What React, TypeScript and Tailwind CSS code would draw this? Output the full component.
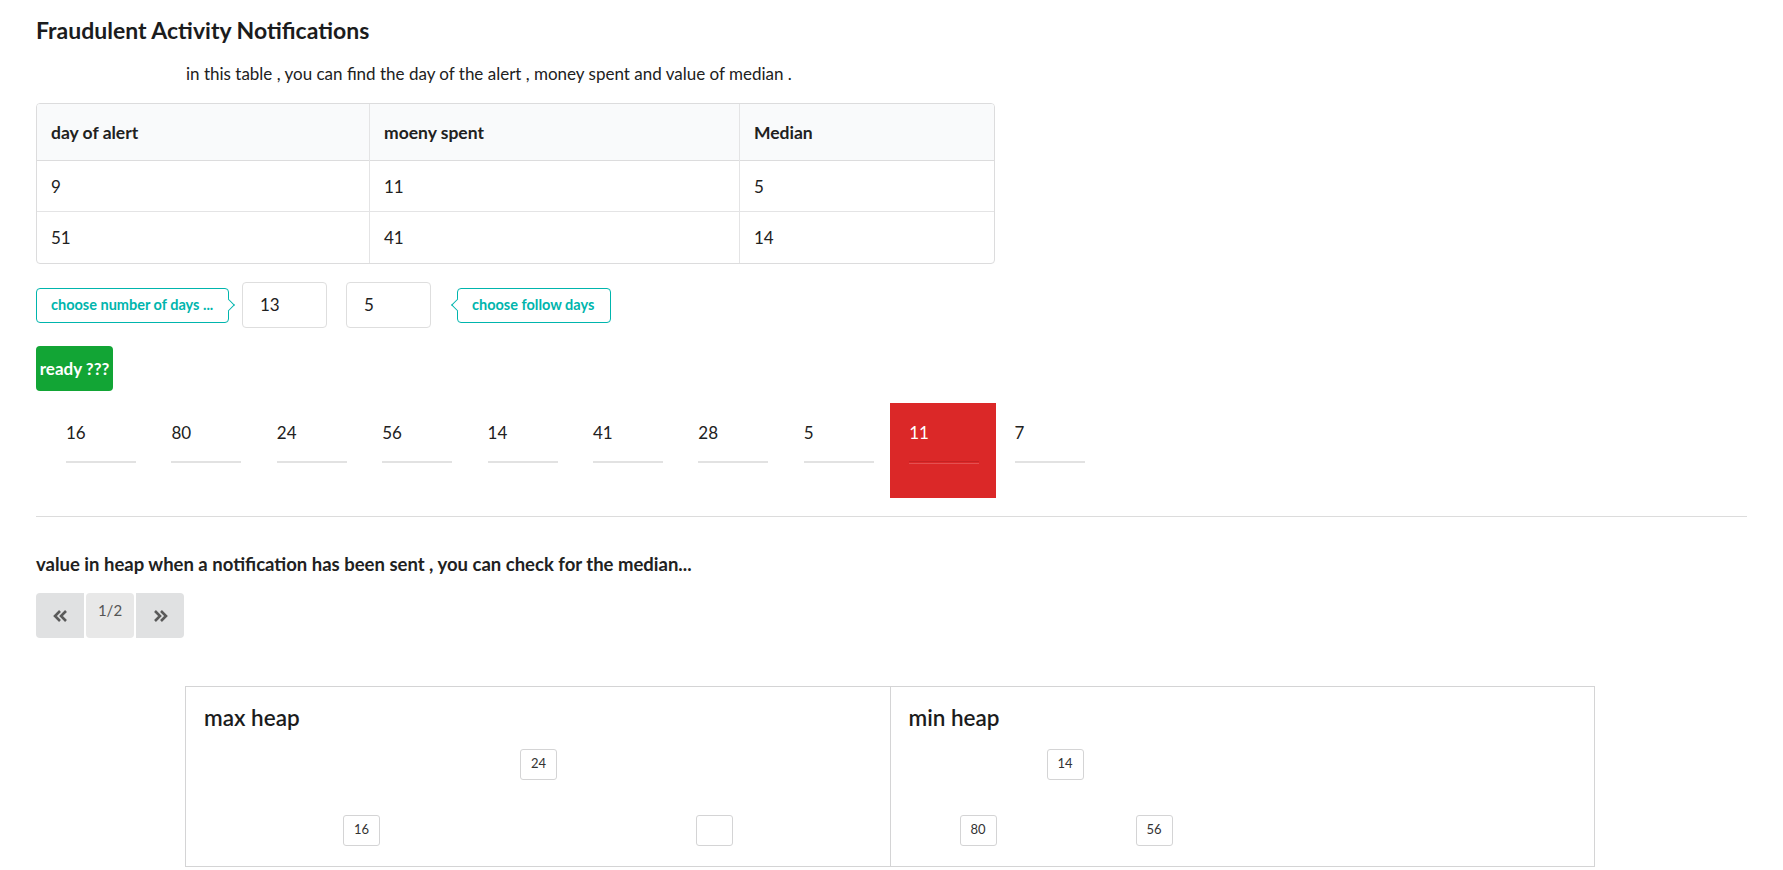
import React from "react";

const rows = [
  ["9", "11", "5"],
  ["51", "41", "14"],
];

const values = ["16", "80", "24", "56", "14", "41", "28", "5", "11", "7"];
const activeIndex = 8;

type HeapNode = { label: string; left: number; top: number };

const maxHeap: HeapNode[] = [
  { label: "24", left: 334, top: 62 },
  { label: "16", left: 157, top: 128 },
  { label: "", left: 510, top: 128 },
];

const minHeap: HeapNode[] = [
  { label: "14", left: 156, top: 62 },
  { label: "80", left: 69, top: 128 },
  { label: "56", left: 245, top: 128 },
];

function PointingLabel({
  text,
  side,
  className,
}: {
  text: string;
  side: "left" | "right";
  className?: string;
}) {
  return (
    <div
      className={`relative flex h-[35px] items-center rounded-[4px] border border-[#00b5ad] bg-white text-[14.5px] font-bold whitespace-nowrap text-[#00b5ad] ${className ?? ""}`}
    >
      {side === "right" ? (
        <span className="absolute top-1/2 right-[-5px] h-[9px] w-[9px] -translate-y-1/2 rotate-45 border-t border-r border-[#00b5ad] bg-white" />
      ) : (
        <span className="absolute top-1/2 left-[-5px] h-[9px] w-[9px] -translate-y-1/2 rotate-45 border-b border-l border-[#00b5ad] bg-white" />
      )}
      <span className="relative">{text}</span>
    </div>
  );
}

function HeapPanel({ title, nodes, last }: { title: string; nodes: HeapNode[]; last?: boolean }) {
  return (
    <div className={`relative h-full flex-1 ${last ? "" : "border-r border-[#d4d4d5]"}`}>
      <div className="pt-[17px] pl-[18px] text-[22.5px] leading-[28px] font-semibold text-[#1b1c1d]">
        {title}
      </div>
      {nodes.map((n, i) => (
        <div
          key={i}
          className="absolute flex h-[31px] w-[37px] justify-center rounded-[3px] border border-[#d4d4d5] bg-white pt-[6px] text-[13px] leading-[14px] text-[#333]"
          style={{ left: n.left, top: n.top }}
        >
          {n.label}
        </div>
      ))}
    </div>
  );
}

function Chevrons({ dir }: { dir: "left" | "right" }) {
  const d =
    dir === "left"
      ? "M7 1 L2 6 L7 11 M13 1 L8 6 L13 11"
      : "M2 1 L7 6 L2 11 M8 1 L13 6 L8 11";
  return (
    <svg width="15" height="12" viewBox="0 0 15 12" fill="none">
      <path d={d} stroke="#5a5a5a" strokeWidth="2.6" strokeLinejoin="miter" />
    </svg>
  );
}

export default function App() {
  return (
    <div className="min-h-[870px] bg-white px-[36px] pt-[16px] font-['Lato','Liberation_Sans',sans-serif] text-[#212121]">
      <h1 className="text-[23px] leading-[28px] font-bold text-[#1b1c1d]">
        Fraudulent Activity Notifications
      </h1>
      <p className="mt-[18px] pl-[150px] text-[17px] leading-[24px]">
        in this table , you can find the day of the alert , money spent and value of median .
      </p>

      <div className="mt-[17px] w-[959px] overflow-hidden rounded-[4px] border border-[#dcdcdd]">
        <div className="flex h-[57px] items-center border-b border-[#dcdcdd] bg-[#f9fafb] text-[17.5px] font-bold">
          <div className="w-[333px] border-r border-[#e4e4e5] pl-[14px] leading-[57px]">day of alert</div>
          <div className="w-[370px] border-r border-[#e4e4e5] pl-[14px] leading-[57px]">moeny spent</div>
          <div className="flex-1 pl-[14px] leading-[57px]">Median</div>
        </div>
        {rows.map((r, i) => (
          <div
            key={i}
            className={`flex h-[51px] items-center text-[17px] ${i < rows.length - 1 ? "border-b border-[#e4e4e5]" : ""}`}
          >
            <div className="w-[333px] border-r border-[#e4e4e5] pl-[14px] leading-[51px]">{r[0]}</div>
            <div className="w-[370px] border-r border-[#e4e4e5] pl-[14px] leading-[51px]">{r[1]}</div>
            <div className="flex-1 pl-[14px] leading-[51px]">{r[2]}</div>
          </div>
        ))}
      </div>

      <div className="mt-[18px] flex items-center">
        <PointingLabel text="choose number of days ..." side="right" className="w-[193px] pl-[14px]" />
        <div className="ml-[13px] flex h-[46px] w-[85px] items-center rounded-[4px] border border-[#dedede] pl-[17px] text-[17px]">
          13
        </div>
        <div className="ml-[19px] flex h-[46px] w-[85px] items-center rounded-[4px] border border-[#dedede] pl-[17px] text-[17px]">
          5
        </div>
        <PointingLabel text="choose follow days" side="left" className="ml-[26px] w-[154px] pl-[14px]" />
      </div>

      <button className="mt-[18px] flex h-[45px] w-[77px] items-center justify-center rounded-[4px] bg-[#12a535] text-[17px] font-bold whitespace-nowrap text-white">
        ready ???
      </button>

      <div className="mt-[12px] ml-[11px] flex">
        {values.map((v, i) => {
          const active = i === activeIndex;
          return (
            <div
              key={i}
              className={`h-[95px] w-[105.4px] px-[19px] pt-[18px] ${active ? "bg-[#db2828] text-white" : "text-[#212121]"}`}
            >
              <div className="text-[17px] leading-[24px]">{v}</div>
              {active ? (
                <div className="mt-[16px] h-[3px] w-[70px] border-t border-b border-t-[#c42222] border-b-[#e45050]" />
              ) : (
                <div className="mt-[16px] h-[2px] w-[70px] bg-[#e2e2e2]" />
              )}
            </div>
          );
        })}
      </div>

      <div className="mt-[18px] border-t border-[#dcdcdc]" />

      <h3 className="mt-[35px] text-[18.5px] leading-[24px] font-bold">
        value in heap when a notification has been sent , you can check for the median...
      </h3>

      <div className="mt-[17px] flex gap-[2px]">
        <button className="flex h-[45px] w-[48px] items-center justify-center rounded-l-[4px] bg-[#e0e1e2]">
          <Chevrons dir="left" />
        </button>
        <div className="h-[45px] w-[48px] rounded-[4px] bg-[#e8e8e8] pt-[8px] text-center text-[15px] leading-[18px] text-[#555]">
          1/2
        </div>
        <button className="flex h-[45px] w-[48px] items-center justify-center rounded-r-[4px] bg-[#e0e1e2]">
          <Chevrons dir="right" />
        </button>
      </div>

      <div className="mt-[48px] ml-[149px] flex h-[181px] w-[1410px] border border-[#d4d4d5]">
        <HeapPanel title="max heap" nodes={maxHeap} />
        <HeapPanel title="min heap" nodes={minHeap} last />
      </div>
    </div>
  );
}
